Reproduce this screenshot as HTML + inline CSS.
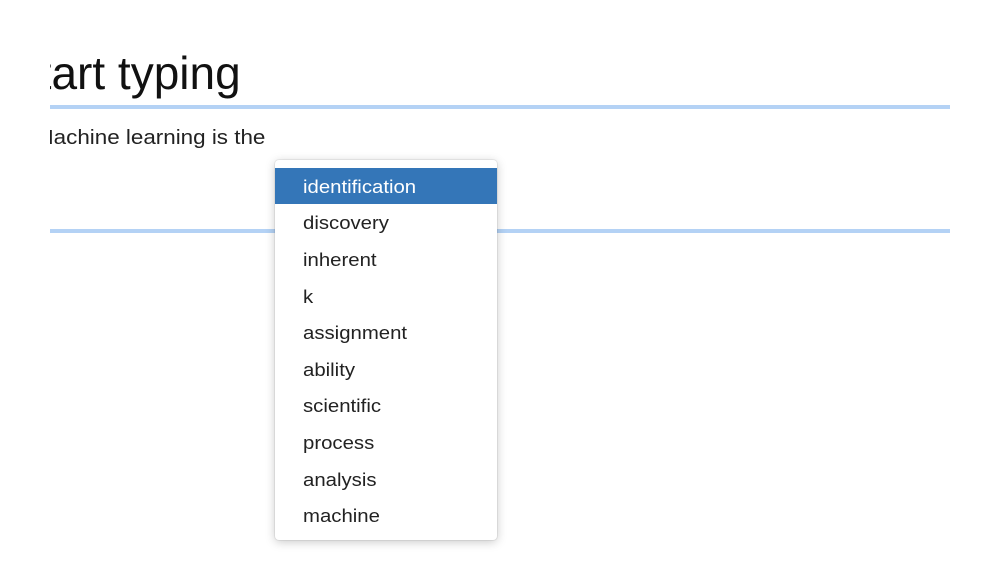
<!DOCTYPE html>
<html><head><style>
body{margin:0;width:1000px;height:563px;background:#fff;position:relative;overflow:hidden;font-family:"Liberation Sans",sans-serif;color:#111}
.clip{position:absolute;left:50px;width:900px;overflow:hidden;white-space:nowrap}
.line{position:absolute;left:50px;width:900px;height:4px;background:#b4d2f5}
.dd{position:absolute;left:275px;top:160px;width:222px;height:380px;background:#fff;border-radius:4px;box-shadow:0 2px 10px rgba(0,0,0,.22),0 0 0 1px rgba(0,0,0,.06)}
.it{position:absolute;left:0;width:222px;height:36px;line-height:38px;padding-left:28px;box-sizing:border-box;color:#222}
.it span{display:inline-block;font-size:18.5px;transform:scaleX(1.1);transform-origin:left center}
.sel{background:#3476b8;color:#fff}
</style></head><body>
<div class="clip" style="top:44px;height:60px"><div style="position:absolute;left:-42px;top:0;font-size:46px;line-height:58px;color:#111">Start typing</div></div>
<div class="line" style="top:105px"></div>
<div class="clip" style="top:123px;height:30px"><div style="position:absolute;left:-15px;top:0;font-size:20px;line-height:30px;color:#222;transform:scaleX(1.12);transform-origin:left center">Machine learning is the</div></div>
<div class="line" style="top:229px"></div>
<div class="dd">
<div class="it sel" style="top:8px"><span>identification</span></div>
<div class="it" style="top:44px"><span>discovery</span></div>
<div class="it" style="top:81px"><span>inherent</span></div>
<div class="it" style="top:118px"><span>k</span></div>
<div class="it" style="top:154px"><span>assignment</span></div>
<div class="it" style="top:191px"><span>ability</span></div>
<div class="it" style="top:227px"><span>scientific</span></div>
<div class="it" style="top:264px"><span>process</span></div>
<div class="it" style="top:301px"><span>analysis</span></div>
<div class="it" style="top:337px"><span>machine</span></div>
</div>
</body></html>
